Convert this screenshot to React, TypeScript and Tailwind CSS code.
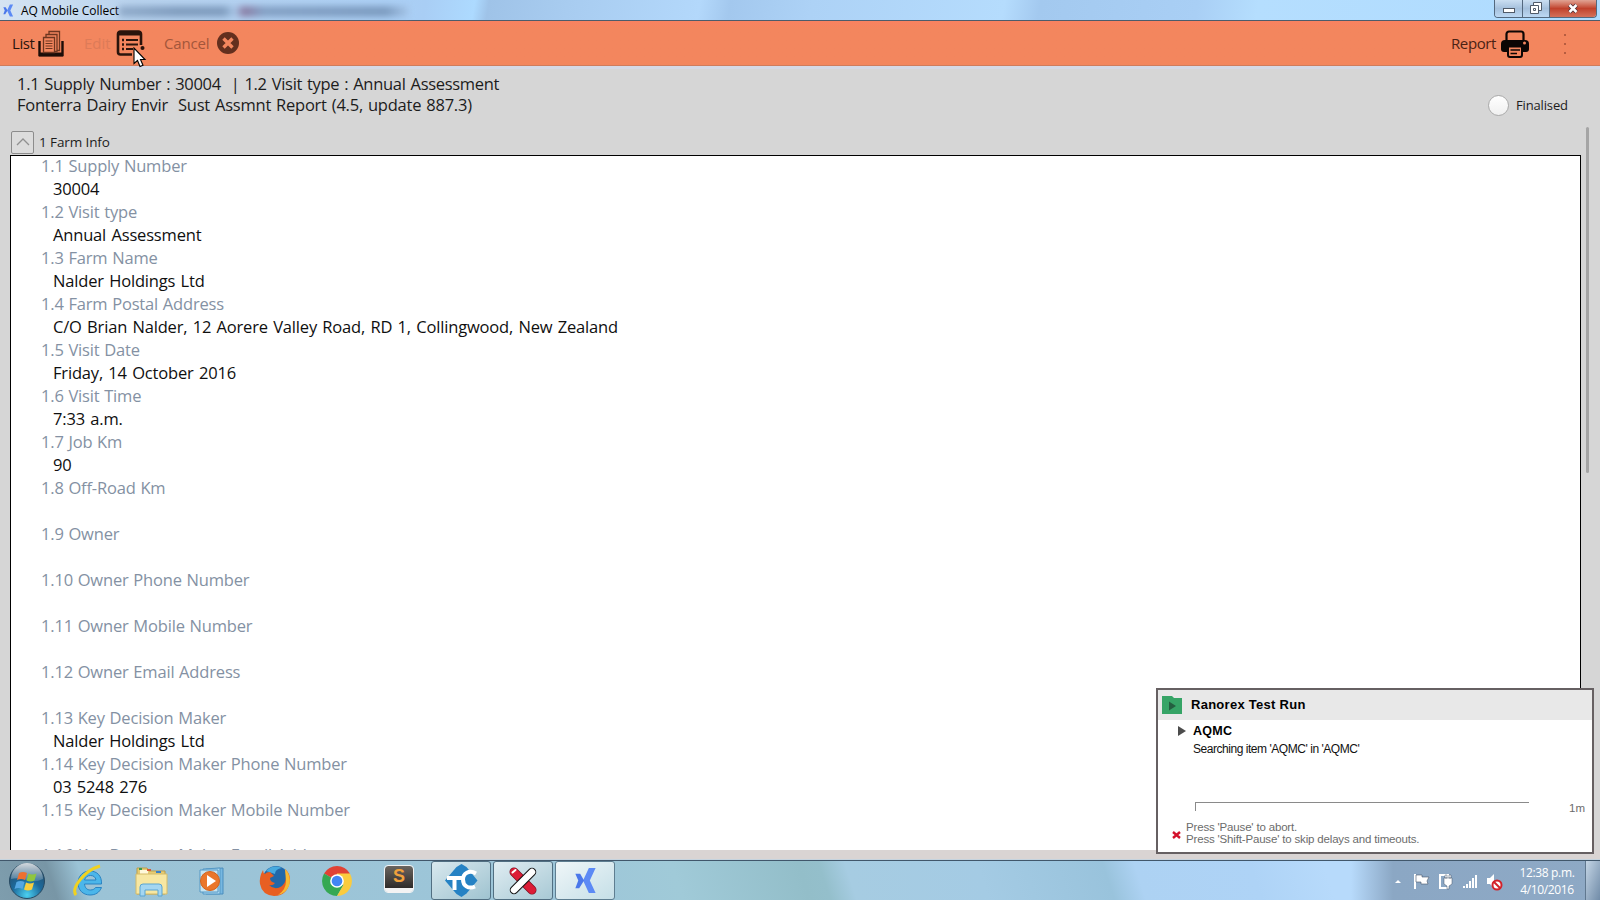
const fields: [string, string][] = [
  ["1.1 Supply Number", "30004"],
  ["1.2 Visit type", "Annual Assessment"],
  ["1.3 Farm Name", "Nalder Holdings Ltd"],
  ["1.4 Farm Postal Address", "C/O Brian Nalder, 12 Aorere Valley Road, RD 1, Collingwood, New Zealand"],
  ["1.5 Visit Date", "Friday, 14 October 2016"],
  ["1.6 Visit Time", "7:33 a.m."],
  ["1.7 Job Km", "90"],
  ["1.8 Off-Road Km", ""],
  ["1.9 Owner", ""],
  ["1.10 Owner Phone Number", ""],
  ["1.11 Owner Mobile Number", ""],
  ["1.12 Owner Email Address", ""],
  ["1.13 Key Decision Maker", "Nalder Holdings Ltd"],
  ["1.14 Key Decision Maker Phone Number", "03 5248 276"],
  ["1.15 Key Decision Maker Mobile Number", ""],
  ["1.16 Key Decision Maker Email Address", ""],
];

function XLogo({ className }: { className: string }) {
  return (
    <svg className={className} viewBox="0 0 22 28">
      <path d="M15 1h7l-6 13 6 13h-7L9 14z" fill="#5c8af5" />
      <path d="M1 7h5l4 7-5 8H1l3-8z" fill="#4a77ea" />
    </svg>
  );
}

function TitleBar() {
  return (
    <div className="flex h-[21px] shrink-0 items-start border-b border-[#4d5c6b] bg-[linear-gradient(100deg,#d6e4f2_0,#b9d3ee_130px,#a9cef5_420px,#addaff_468px,#9fc3e8_482px,#a8ccf0_560px,#b3d8fb_690px,#a3c8ee_720px,#add2f6_800px,#b5dcfd_990px,#a3c9ef_1025px,#a9cff5_1180px,#b5defe_1240px,#aedbff_1600px)]">
      <XLogo className="ml-[2px] mt-[4px] h-[13px] w-[12px]" />
      <span className="ml-[7px] mt-[2px] h-[17px] w-[98px] whitespace-nowrap text-[12px] leading-[17px] tracking-[-0.05px] text-black">AQ Mobile Collect</span>
      <div className="mt-[6px] h-[11px] w-[290px] bg-[linear-gradient(90deg,#7d99ba,#6582a6_20%,#6582a6_36%,#a5c4e6_40%,#76527d_43%,#6d8ab0_50%,#6582a6_92%,#a5c4e6)] opacity-65 blur-[3px]" />
      <div className="ml-auto mr-[3px] flex h-[18px] overflow-hidden rounded-b-[4px] border border-t-0 border-[#53687e]">
        <div className="flex w-[28px] items-end justify-center border-r border-[#53687e] bg-linear-to-b from-[#cbdff2] via-[#a5c0dc] to-[#bcd8f3] pb-[4px]">
          <div className="h-[5px] w-[12px] border border-[#505a68] bg-white" />
        </div>
        <div className="flex w-[27px] items-center justify-center border-r border-[#53687e] bg-linear-to-b from-[#cbdff2] via-[#a5c0dc] to-[#bcd8f3]">
          <svg width="13" height="13" viewBox="0 0 13 13" fill="#fff" stroke="#505a68">
            <path d="M3.500 .5h8v8h-8z" />
            <path d="M.5 3.500h8v8h-8z" />
            <path d="M3.500 6.500h2v2h-2z" />
          </svg>
        </div>
        <div className="flex w-[46px] items-center justify-center bg-linear-to-b from-[#e0a394] via-[#c0412c] to-[#d4705a]">
          <svg width="12" height="11" viewBox="0 0 12 11">
            <path d="M2.500 2l7 7M9.500 2l-7 7" stroke="#4c3038" strokeWidth="4" />
            <path d="M2.500 2l7 7M9.500 2l-7 7" stroke="#fff" strokeWidth="2.500" />
          </svg>
        </div>
      </div>
    </div>
  );
}

function Toolbar() {
  return (
    <div className="relative flex h-[45px] shrink-0 items-center border-b border-[#cf7c5d] bg-linear-to-b from-[#fa8260] via-[#f3865e] via-20% to-[#f3865e] text-[15px]">
      <span className="ml-[12px] w-[26px] tracking-[-0.4px] text-[#2a150d]">List</span>
      <svg className="mt-[2px]" width="26" height="28" viewBox="0 0 26 28" fill="none" stroke="#6e3620">
        <path d="M1.500 11v14h23V11" stroke="#1c0d08" strokeWidth="2.400" />
        <path d="M1 24.500h24" stroke="#1c0d08" strokeWidth="4" />
        <path d="M5.500 7.500h11v15h-11zM8 7V4.500h11v17h-2M11 4V1.500h10.500v19H19" strokeWidth="1.300" />
        <path d="M7.500 11h7M7.500 13.500h7M7.500 16h7M7.500 18.500h7" strokeWidth="1.200" />
      </svg>
      <span className="ml-[20px] w-[32px] text-[#dd7b58]">Edit</span>
      <svg className="mt-[1px]" width="29" height="28" viewBox="0 0 29 28" fill="none" stroke="#2a140c">
        <path d="M25 15V4a2.500 2.500 0 0 0-2.500-2.500h-18A2.500 2.500 0 0 0 2 4v18a2.500 2.500 0 0 0 2.500 2.500H16" strokeWidth="2.600" />
        <path d="M2 3.500h23" strokeWidth="4" />
        <path d="M10 10h12M10 14.500h12M10 19h7" strokeWidth="2" />
        <path d="M6 10h2M6 14.500h2M6 19h2" strokeWidth="2.400" />
        <circle cx="26.500" cy="18" r="2" fill="#2a140c" stroke="none" />
      </svg>
      <span className="ml-[19px] w-[53px] tracking-[-0.15px] text-[#a3563b]">Cancel</span>
      <svg width="22" height="22" viewBox="0 0 22 22">
        <circle cx="11" cy="11" r="11" fill="#632f1e" />
        <path d="M6.500 6.500l9 9M15.500 6.500l-9 9" stroke="#f3865e" strokeWidth="3.400" />
      </svg>
      <span className="ml-auto w-[50px] tracking-[-0.4px] text-[#4a2214]">Report</span>
      <svg className="mt-[1px]" width="28" height="28" viewBox="0 0 28 28">
        <path d="M5.500 11V4a2.500 2.500 0 0 1 2.500-2.500h12A2.500 2.500 0 0 1 22.500 4v7" fill="none" stroke="#0c0604" strokeWidth="2.200" />
        <path d="M4 10h20a4 4 0 0 1 4 4v5a3 3 0 0 1-3 3H3a3 3 0 0 1-3-3v-5a4 4 0 0 1 4-4z" fill="#0c0604" />
        <circle cx="23.500" cy="13" r="1.500" fill="#f3865e" />
        <path d="M7 16.500h14V25a2 2 0 0 1-2 2H9a2 2 0 0 1-2-2z" fill="#f3865e" stroke="#0c0604" strokeWidth="2" />
        <path d="M9.500 20h9.500M9.500 23.500h6.500" stroke="#0c0604" strokeWidth="1.500" />
      </svg>
      <div className="ml-[35px] mr-[34px] mt-[2px] flex w-[2px] flex-col gap-[7px]">
        <i className="size-[2px] bg-[#b75d40]" />
        <i className="size-[2px] bg-[#b75d40]" />
        <i className="size-[2px] bg-[#b75d40]" />
      </div>
      <svg className="absolute left-[133px] top-[26px] z-10" width="14" height="22" viewBox="0 0 14 22">
        <path d="M1 1v15.500l3.500-3 2.500 6 3-1.200-2.500-5.800H12z" fill="#fff" stroke="#000" strokeWidth="1.100" />
      </svg>
    </div>
  );
}

function RecordHeader() {
  return (
    <div className="flex h-[63px] shrink-0 items-start justify-between border-t-[3px] border-[#d5d9e6]">
      <div className="whitespace-pre pl-[17px] pt-[4px] text-[16.500px] leading-[21px] text-[#1c1c1c]">
        <div className="tracking-[-0.3px] [word-spacing:0.95px]">1.1 Supply Number : 30004  | 1.2 Visit type : Annual Assessment</div>
        <div className="tracking-[-0.23px] [word-spacing:0.95px]">Fonterra Dairy Envir  Sust Assmnt Report (4.5, update 887.3)</div>
      </div>
      <div className="mr-[32px] mt-[26px] flex items-center">
        <div className="size-[21px] rounded-full border border-[#aaa] bg-linear-to-b from-white to-[#f0f0f0]" />
        <span className="ml-[7px] w-[52px] text-[13px] tracking-[-0.15px] text-[#1c1c1c]">Finalised</span>
      </div>
    </div>
  );
}

function FarmInfo() {
  return (
    <div className="flex min-h-0 flex-1 flex-col pl-[10px]">
      <div className="flex h-[26px] shrink-0 items-center">
        <div className="ml-[1px] flex size-[23px] items-center justify-center rounded-[2px] border border-[#8c8c8c] bg-[#dcdcdc]">
          <svg width="14" height="8" viewBox="0 0 14 8" fill="none" stroke="#909090" strokeWidth="1.300"><path d="M1 7l6-6 6 6" /></svg>
        </div>
        <span className="ml-[5px] text-[13.500px] tracking-[-0.1px] text-[#1c1c1c]">1 Farm Info</span>
      </div>
      <div className="mr-[19px] min-h-0 flex-1 overflow-hidden border border-b-0 border-black bg-white text-[16.500px] leading-[23px]">
        {fields.map(([label, value]) => (
          <div key={label} className="h-[46.040px] whitespace-nowrap pl-[30px] last:-mt-px">
            <div className="h-[23px] -translate-y-[2px] tracking-[-0.17px] text-[#8491a3] [word-spacing:0.6px]">{label}</div>
            <div className="h-[23px] -translate-y-[2px] pl-[12px] tracking-[-0.17px] text-[#0f0f0f] [word-spacing:1.2px]">{value}</div>
          </div>
        ))}
      </div>
    </div>
  );
}

function RanorexPanel() {
  return (
    <div className="absolute left-[1156px] top-[688px] flex h-[166px] w-[438px] flex-col border-2 border-[#666062] bg-white font-['Liberation_Sans',sans-serif]">
      <div className="flex h-[30px] shrink-0 items-center bg-[#e8e8e8] pl-[4px]">
        <svg width="20" height="18" viewBox="0 0 20 18">
          <path d="M0 0h10l2 2h8v16H0z" fill="#36a466" />
          <path d="M7 5.500l7 4.500-7 4.500z" fill="#245f40" />
        </svg>
        <span className="ml-[9px] text-[13px] font-bold tracking-[0.27px] text-black">Ranorex Test Run</span>
      </div>
      <div className="flex h-[22px] shrink-0 items-center pl-[20px]">
        <svg width="8" height="10" viewBox="0 0 8 10"><path d="M0 0l8 5-8 5z" fill="#4c4c4c" /></svg>
        <span className="ml-[7px] text-[12.500px] font-bold tracking-[0.25px] text-black">AQMC</span>
      </div>
      <div className="pl-[35px] text-[12px] leading-[15px] tracking-[-0.460px] text-[#111]">Searching item 'AQMC' in 'AQMC'</div>
      <div className="mt-[45px] flex shrink-0 pl-[37px]">
        <div className="h-[9px] w-[334px] border-l border-t border-[#8a8a8a]" />
        <span className="ml-auto mr-[7px] text-[11.500px] leading-[13px] text-[#6c6c6c]">1m</span>
      </div>
      <div className="mt-[6px] flex items-center pl-[14px] text-[11.500px] leading-[12px] tracking-[-0.17px] text-[#6c6c6c]">
        <svg className="mt-[3px]" width="9" height="8" viewBox="0 0 9 8"><path d="M1 1l7 6M8 1L1 7" stroke="#d3122c" strokeWidth="2.400" /></svg>
        <div className="ml-[5px] whitespace-nowrap"><div>Press 'Pause' to abort.</div><div>Press 'Shift-Pause' to skip delays and timeouts.</div></div>
      </div>
    </div>
  );
}

function StartOrb() {
  return (
    <svg width="38" height="38" viewBox="0 0 38 38">
      <defs>
        <radialGradient id="orb" cx=".5" cy=".9" r=".85"><stop offset="0" stopColor="#4bd0f0" /><stop offset=".5" stopColor="#1c6a9c" /><stop offset="1" stopColor="#284c68" /></radialGradient>
        <linearGradient id="orbShine" x2="0" y2="1"><stop offset="0" stopColor="#fff" stopOpacity=".8" /><stop offset="1" stopColor="#fff" stopOpacity=".15" /></linearGradient>
      </defs>
      <circle cx="19" cy="19" r="17.500" fill="url(#orb)" stroke="#284a62" />
      <path d="M3 17a16 16 0 0 1 32 0q-8 4-16 1-8-3-16-1z" fill="url(#orbShine)" />
      <path d="M11 11q4-2 8 0l-2 7q-4-2-8 0z" fill="#ee7030" />
      <path d="M20.500 11.500q4 2 8 0l-2 7q-4 2-8 0z" fill="#8fc63f" />
      <path d="M8.500 20q4-2 8 0l-2 7q-4-2-8 0z" fill="#54a7e2" />
      <path d="M18 20.500q4 2 8 0l-2 7q-4 2-8 0z" fill="#f8cf3d" />
    </svg>
  );
}

function Taskbar() {
  return (
    <div className="relative flex h-[40px] shrink-0 items-center border-t border-[#41576b] bg-[linear-gradient(72deg,#7e9dad_0,#7896a6_55px,#9bc3d6_85px,#9dc6d9_550px,#a0cad8_650px,#93bec9_770px,#94bfcb_790px,#a6cce2_815px,#a4cbe4_940px,#99c3dc_1060px,#add2f3_1090px,#aed3f6_1200px,#b7dafb_1270px)]">
      <div className="ml-[8px]"><StartOrb /></div>
      <svg className="ml-[27px]" width="32" height="34" viewBox="0 0 32 34">
        <path d="M28.500 20H11.500c.5 4 2.500 6 6 6 2.500 0 4-1 5-2.500h6c-2 5-6 7.500-11.500 7.500-7 0-12-5-12-12S10 7 17 7s12 5 11.500 13zM11.500 16H23c-.5-3-2.500-4.500-5.500-4.500S12.500 13 11.500 16z" fill="#4bb6ea" stroke="#2a83c2" />
        <path d="M3 31C-2 25 10 7 27 2" fill="none" stroke="#f1d21f" strokeWidth="3" />
      </svg>
      <svg className="ml-[30px]" width="33" height="32" viewBox="0 0 33 32">
        <path d="M2 3h10l2 3h16v23H2z" fill="#e7cc72" stroke="#b99d4d" />
        <path d="M5 5h8v4h16v4H5z" fill="#fff8d9" /><path d="M1 9h31v20H1z" fill="#f7e7a2" stroke="#d4bb68" />
        <path d="M4 3h3v2H4z" fill="#3b9b50" /><path d="M12 4h4v2h-4z" fill="#d75836" /><path d="M21 6h5v2h-5z" fill="#3a81c8" />
        <path d="M5 31v-9q0-3 3-3h16q3 0 3 3v9h-4v-6H10v6z" fill="#a4d6f1" stroke="#5aa5d3" />
      </svg>
      <svg className="ml-[30px]" width="32" height="30" viewBox="0 0 32 30">
        <path d="M8 3l17-1v26H8z" fill="#77b8e1" stroke="#4b8dbd" /><path d="M5 3l17-1v26H5z" fill="#a7d5ef" stroke="#5598c5" /><path d="M2 4h18v22H2z" fill="#c6e4f2" stroke="#5598c5" />
        <circle cx="12" cy="15" r="9.500" fill="#ea762b" stroke="#d4631c" /><path d="M9 9l9 6-9 6z" fill="#fff" />
      </svg>
      <svg className="ml-[29px]" width="32" height="32" viewBox="0 0 32 32">
        <circle cx="17" cy="14" r="13" fill="#2268a9" /><path d="M7 6Q14-1 23 3q-7 1-7 6z" fill="#47aadf" />
        <path d="M4 5Q0 12 1 19q2 11 14 12 14 0 16-16Q31 8 26 4q3 12-3 17-7 5-13-1 4 1 6-2-5-1-5-5l4-2-4-4q-4 0-5 2Q4 8 4 5z" fill="#e85f22" />
        <path d="M26 4q7 7 4 17-4 8-11 9 8-5 8-14z" fill="#f7ba32" />
      </svg>
      <svg className="ml-[31px]" width="30" height="30" viewBox="0 0 32 32">
        <path d="M16 16L2.200 8A16 16 0 0 1 29.800 8z" fill="#e04235" /><path d="M16 16L2.200 8A16 16 0 0 0 16 32l7-12z" fill="#35a853" /><path d="M16 16V8h13.800A16 16 0 0 1 16 32l7-12z" fill="#fbcb3e" />
        <circle cx="16" cy="16" r="7.300" fill="#fff" /><circle cx="16" cy="16" r="5.700" fill="#4285f4" />
      </svg>
      <div className="mb-[3px] ml-[33px] flex h-[26px] w-[28px] items-start justify-center rounded-[3px] border-b-[4px] border-[#f3f3f3] bg-linear-to-b from-[#6b6560] to-[#2f2c2a] font-['Liberation_Sans',sans-serif] text-[18px] font-bold leading-[20px] text-[#f1a13c] outline outline-[#f3f3f3]">S</div>
      <div className="ml-[18px] flex h-full gap-[2px]">
        <div className="flex w-[60px] items-center justify-center rounded-[3px] border border-[#516f82] bg-linear-to-br from-[#d8e8ee] to-[#9fc3d0]">
          <svg width="33" height="33" viewBox="0 0 33 33"><path d="M16.500 0l5 3 11 13.500-11 13-5 3.500-5-3L0 16.500 11.500 3z" fill="#2582c4" /><path d="M2 14h15M9.500 14v12" stroke="#fff" strokeWidth="4" /><path d="M31 9.500c-7-4-13 0-13 6s5 10 12 7" fill="none" stroke="#fff" strokeWidth="4" /></svg>
        </div>
        <div className="flex w-[60px] items-center justify-center rounded-[3px] border border-[#516f82] bg-linear-to-br from-[#e0edf2] to-[#a8c9d5]">
          <svg width="30" height="30" viewBox="0 0 30 30" strokeLinecap="round"><path d="M6 6l18 18" stroke="#7b1020" strokeWidth="9" /><path d="M6 6l18 18" stroke="#dc1c36" strokeWidth="7.500" /><path d="M24 6L6 24" stroke="#111" strokeWidth="8.500" /><path d="M24 6L6 24" stroke="#fff" strokeWidth="6.500" /><path d="M4.500 6.500l3-2.500" stroke="#fff" strokeWidth="2" /></svg>
        </div>
        <div className="flex w-[60px] items-center justify-center rounded-[3px] border border-[#5e7e91] bg-linear-to-br from-[#eff6f8] to-[#c5dfe7]"><XLogo className="h-[27px] w-[22px]" /></div>
      </div>
      <div className="ml-auto flex h-full items-center bg-[linear-gradient(90deg,#8ba7c400_0,#8ba7c4_42px,#8ea9c5_100%)] pl-[42px]">
        <svg width="112" height="20" viewBox="0 0 112 20" fill="#fff">
          <path d="M2 12l3-3 3 3z" />
          <path d="M22 3v15" stroke="#fff" strokeWidth="2" /><path d="M23 4h6v2h7l-2 4 1 3h-7v-2h-5z" stroke="#46566a" strokeWidth=".6" />
          <path d="M47 4h8v13h-8z" fill="none" stroke="#fff" strokeWidth="2" /><path d="M51 7h8v6l-3 2v3h-2v-3l-3-2zM52 4h2v3h-2zM56 4h2v3h-2z" stroke="#46566a" strokeWidth=".5" />
          <path d="M70 15h2v2h-2zM73 13h2v4h-2zM76 10h2v7h-2zM79 7h2v10h-2zM82 4h2v13h-2z" />
          <path d="M94 7h3l4-4v14l-4-4h-3z" /><circle cx="104" cy="14" r="4.500" fill="#fff" stroke="#d3222a" strokeWidth="2" /><path d="M101 11l6 6" stroke="#d3222a" strokeWidth="2" />
        </svg>
        <div className="ml-[10px] w-[64px] text-center text-[12px] leading-[17px] tracking-[-0.35px] text-white"><div>12:38 p.m.</div><div>4/10/2016</div></div>
        <div className="ml-[6px] h-full w-[15px] border-l border-[#60788f] bg-linear-to-br from-[#c4d5e5] to-[#718ca8]" />
      </div>
    </div>
  );
}

export default function App() {
  return (
    <div className="relative flex h-[900px] w-[1600px] flex-col overflow-hidden bg-[#d6d6d6] font-['Open_Sans','Noto_Sans',sans-serif]">
      <TitleBar />
      <Toolbar />
      <RecordHeader />
      <FarmInfo />
      <div className="h-[10px] shrink-0 border-b border-[#c5d3de] bg-[#d9d4d3]" />
      <Taskbar />
      <div className="absolute left-[1586px] top-[127px] h-[346px] w-[3px] rounded-full bg-[#a5a5a5]" />
      <RanorexPanel />
    </div>
  );
}
